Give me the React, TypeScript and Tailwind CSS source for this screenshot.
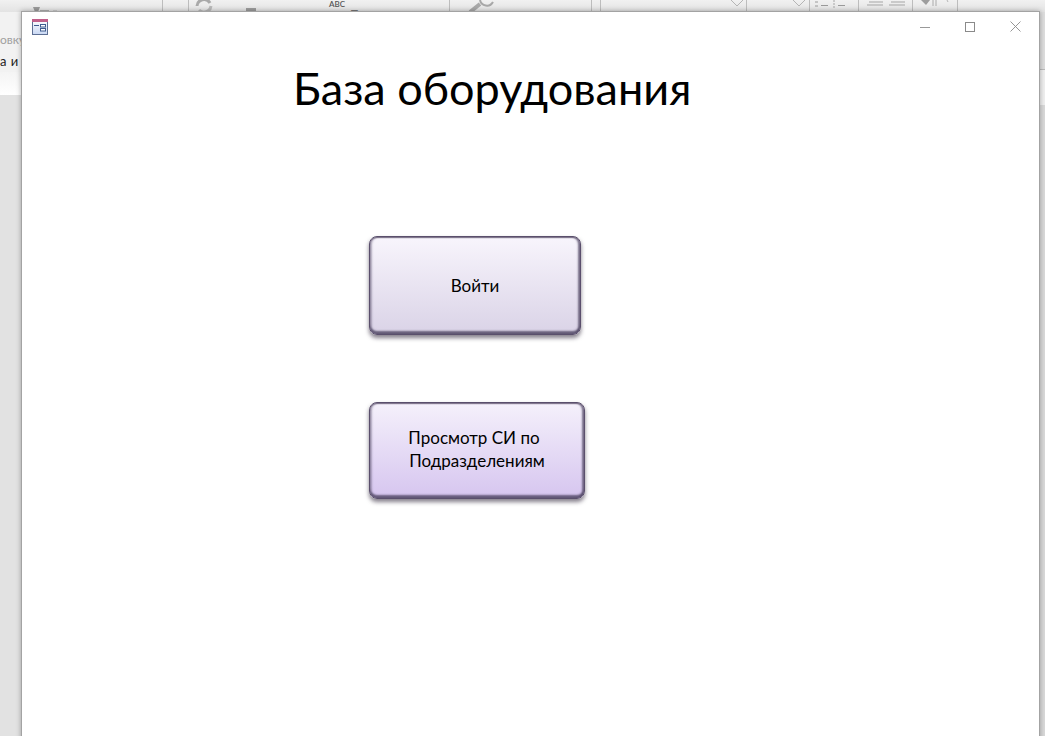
import type { ReactElement, ReactNode } from 'react';

const FormIcon = (): ReactElement => (
    <svg width="16" height="16" viewBox="0 0 16 16" className="block">
        <defs>
            <linearGradient id="formBody" x1="0" y1="0" x2="0" y2="1">
                <stop offset="0" stopColor="#ffffff" />
                <stop offset="1" stopColor="#c9d8f4" />
            </linearGradient>
        </defs>
        <rect x="0.5" y="0.5" width="15" height="15" fill="url(#formBody)" stroke="#5d6f94" />
        <rect x="0" y="0" width="16" height="3" fill="#c0608a" />
        <path d="M2 6.5h5" stroke="#3f5c8f" strokeWidth="1" />
        <rect x="8.5" y="5.5" width="5" height="2.5" fill="#fff" stroke="#3f5c8f" strokeWidth="1" />
        <rect x="8.5" y="9.5" width="5" height="2.5" fill="#fff" stroke="#3f5c8f" strokeWidth="1" />
    </svg>
);

const Chevron = (): ReactElement => (
    <svg width="14" height="7" viewBox="0 0 14 7" className="block">
        <path d="M1 0l6 6 6-6" fill="none" stroke="#b5b5b5" strokeWidth="1" />
    </svg>
);

// one ribbon group, its icons are cut off by the form window
const RibbonGroup = ({
    className,
    children
}: {
    className: string;
    children?: ReactNode;
}): ReactElement => (
    <div className={`flex h-full shrink-0 items-start overflow-hidden border-r border-[#bdbdbd] ${className}`}>
        {children}
    </div>
);

const Ribbon = (): ReactElement => (
    <div className="flex h-3 items-stretch bg-gradient-to-b from-[#f1f1f1] to-[#e3e3e3]">
        <RibbonGroup className="w-[163px] pl-[33px]">
            <svg width="24" height="12" viewBox="0 0 24 12" className="block">
                <path d="M0 7h7l-2 5H2z" fill="#9a9a9a" />
                <path d="M7 10h9v2H7z" fill="#b0b0b0" />
                <path d="M20 11h4" stroke="#b5b5b5" />
            </svg>
        </RibbonGroup>
        <RibbonGroup className="w-[26px]" />
        <RibbonGroup className="w-[261px] pl-[6px]">
            <svg width="20" height="12" viewBox="0 0 20 12" className="block shrink-0">
                <path d="M2 6a7 7 0 0 1 13-3" fill="none" stroke="#a9a9a9" strokeWidth="3" />
                <path d="M16 6a7 7 0 0 1-12 4" fill="none" stroke="#b9b9b9" strokeWidth="3" />
            </svg>
            <svg width="12" height="12" viewBox="0 0 12 12" className="mt-0 ml-[30px] block shrink-0">
                <path d="M1 8h10v4H1z" fill="#9c9c9c" />
            </svg>
            <span className="mt-[-1px] ml-[72px] shrink-0 text-[8px] leading-[10px] font-semibold text-[#555]">ABC</span>
            <span className="mt-[7px] ml-[5px] shrink-0 text-[12px] leading-[14px] whitespace-nowrap text-[#777]">Правописание</span>
        </RibbonGroup>
        <RibbonGroup className="w-[142px] pl-[14px]">
            <svg width="32" height="12" viewBox="0 0 32 12" className="block">
                <path d="M16 0a7 7 0 0 0 13 2" fill="none" stroke="#a8a8a8" strokeWidth="2" />
                <path d="M16 4L6 12" stroke="#a8a8a8" strokeWidth="4" />
            </svg>
        </RibbonGroup>
        <RibbonGroup className="w-[9px]" />
        <RibbonGroup className="w-[146px] justify-end pr-[2px]">
            <Chevron />
        </RibbonGroup>
        <RibbonGroup className="w-[63px] justify-end pr-[3px]">
            <Chevron />
        </RibbonGroup>
        <RibbonGroup className="w-[49px] pl-[5px]">
            <svg width="36" height="12" viewBox="0 0 36 12" className="block">
                <path d="M0 2h3M0 6h3M6 5.5h7M23 5.5h7" stroke="#9a9a9a" />
                <path d="M18 1h2M18 4h2M18 7h2" stroke="#a5a5a5" />
            </svg>
        </RibbonGroup>
        <RibbonGroup className="w-[54px] pl-[8px]">
            <svg width="38" height="12" viewBox="0 0 38 12" className="block">
                <path d="M2 2h14M0 5h16M24 2h14M22 5h16" stroke="#a5a5a5" />
            </svg>
        </RibbonGroup>
        <RibbonGroup className="w-[45px] pl-[8px]">
            <svg width="28" height="12" viewBox="0 0 28 12" className="block">
                <path d="M0 0h9l-4 5z" fill="#9d9d9d" />
                <path d="M12 0v6M15 0v6" stroke="#aaa" />
                <path d="M26 0l1 2" stroke="#b5b5b5" />
            </svg>
        </RibbonGroup>
    </div>
);

export default function App(): ReactElement {
    return (
        <div className="relative h-[736px] w-[1045px] overflow-hidden bg-[#e3e3e3] font-['Lato','Open_Sans',sans-serif]">
            {/* the Access ribbon and document behind the form */}
            <Ribbon />
            <div className="flex h-[724px] justify-between">
                <div className="flex w-[22px] flex-col">
                    <div className="h-[60px] overflow-hidden bg-[#f2f2f2] pt-[20px] text-[12px] leading-[16px] whitespace-nowrap">
                        <div className="text-[#a0a0a0]">овку</div>
                        <div className="mt-[5px] text-[13px] tracking-[0.5px] text-[#222]">а и с</div>
                    </div>
                    <div className="h-[23px] bg-gradient-to-b from-[#f4f4f4] to-white" />
                    <div className="flex-1 bg-[#e2e2e2]" />
                </div>
                <div className="flex w-[5px] flex-col">
                    <div className="h-[58px] border-b border-[#bbb] bg-[#dedede]" />
                    <div className="h-[35px] bg-[#efefef]" />
                    <div className="flex-1 bg-[#d9d9d9]" />
                </div>
            </div>

            {/* form window */}
            <div className="absolute top-[11px] left-[21px] flex h-[740px] w-[1019px] flex-col border border-[#a3a3a3] bg-white shadow-[0_0_5px_rgba(0,0,0,0.3)]">
                <div className="flex h-[29px] shrink-0 items-center justify-between pr-[18px] pl-[10px]">
                    <FormIcon />
                    <div className="flex items-center gap-[35px]">
                        <svg width="10" height="10" viewBox="0 0 10 10">
                            <path d="M0 5.5h10" stroke="#999" strokeWidth="1" />
                        </svg>
                        <svg width="10" height="10" viewBox="0 0 10 10">
                            <rect x="0.5" y="0.5" width="9" height="9" fill="none" stroke="#8a8a8a" strokeWidth="1" />
                        </svg>
                        <svg width="11" height="11" viewBox="0 0 11 11">
                            <path d="M0.5 0.5l10 10M10.5 0.5l-10 10" stroke="#8a8a8a" strokeWidth="0.9" />
                        </svg>
                    </div>
                </div>
                <h1 className="mt-[19px] ml-[271px] text-[45px] leading-[56px] font-normal whitespace-nowrap text-black">
                    База оборудования
                </h1>
                <div className="mt-[120px] ml-[347px] flex flex-col items-start gap-[67px]">
                    <button
                        type="button"
                        className="flex h-[99px] w-[212px] items-center justify-center rounded-[8px] border border-[#5a4f6c] bg-gradient-to-b from-[#f8f5fc] to-[#dad3e7] text-[17px] text-black shadow-[0_3px_4px_rgba(50,40,60,0.6),inset_0_1px_1px_#7a7088,inset_-2px_0_2px_rgba(80,70,100,0.7),inset_2px_0_2px_rgba(90,80,110,0.4),inset_0_-3px_2px_rgba(70,60,90,0.75)]"
                    >
                        Войти
                    </button>
                    <button
                        type="button"
                        className="flex h-[97px] w-[216px] items-center justify-center rounded-[8px] border border-[#5a4f6c] bg-gradient-to-b from-[#f5f1fb] to-[#d6c5ef] pb-[4px] text-center text-[17px] leading-[23px] text-black shadow-[0_3px_4px_rgba(50,40,60,0.6),inset_0_1px_1px_#7a7088,inset_-2px_0_2px_rgba(80,70,100,0.7),inset_2px_0_2px_rgba(90,80,110,0.4),inset_0_-3px_2px_rgba(70,60,90,0.75)]"
                    >
                        <span>
                            <span className="relative -left-[3px]">Просмотр СИ по</span>
                            <br />
                            Подразделениям
                        </span>
                    </button>
                </div>
            </div>
        </div>
    );
}
